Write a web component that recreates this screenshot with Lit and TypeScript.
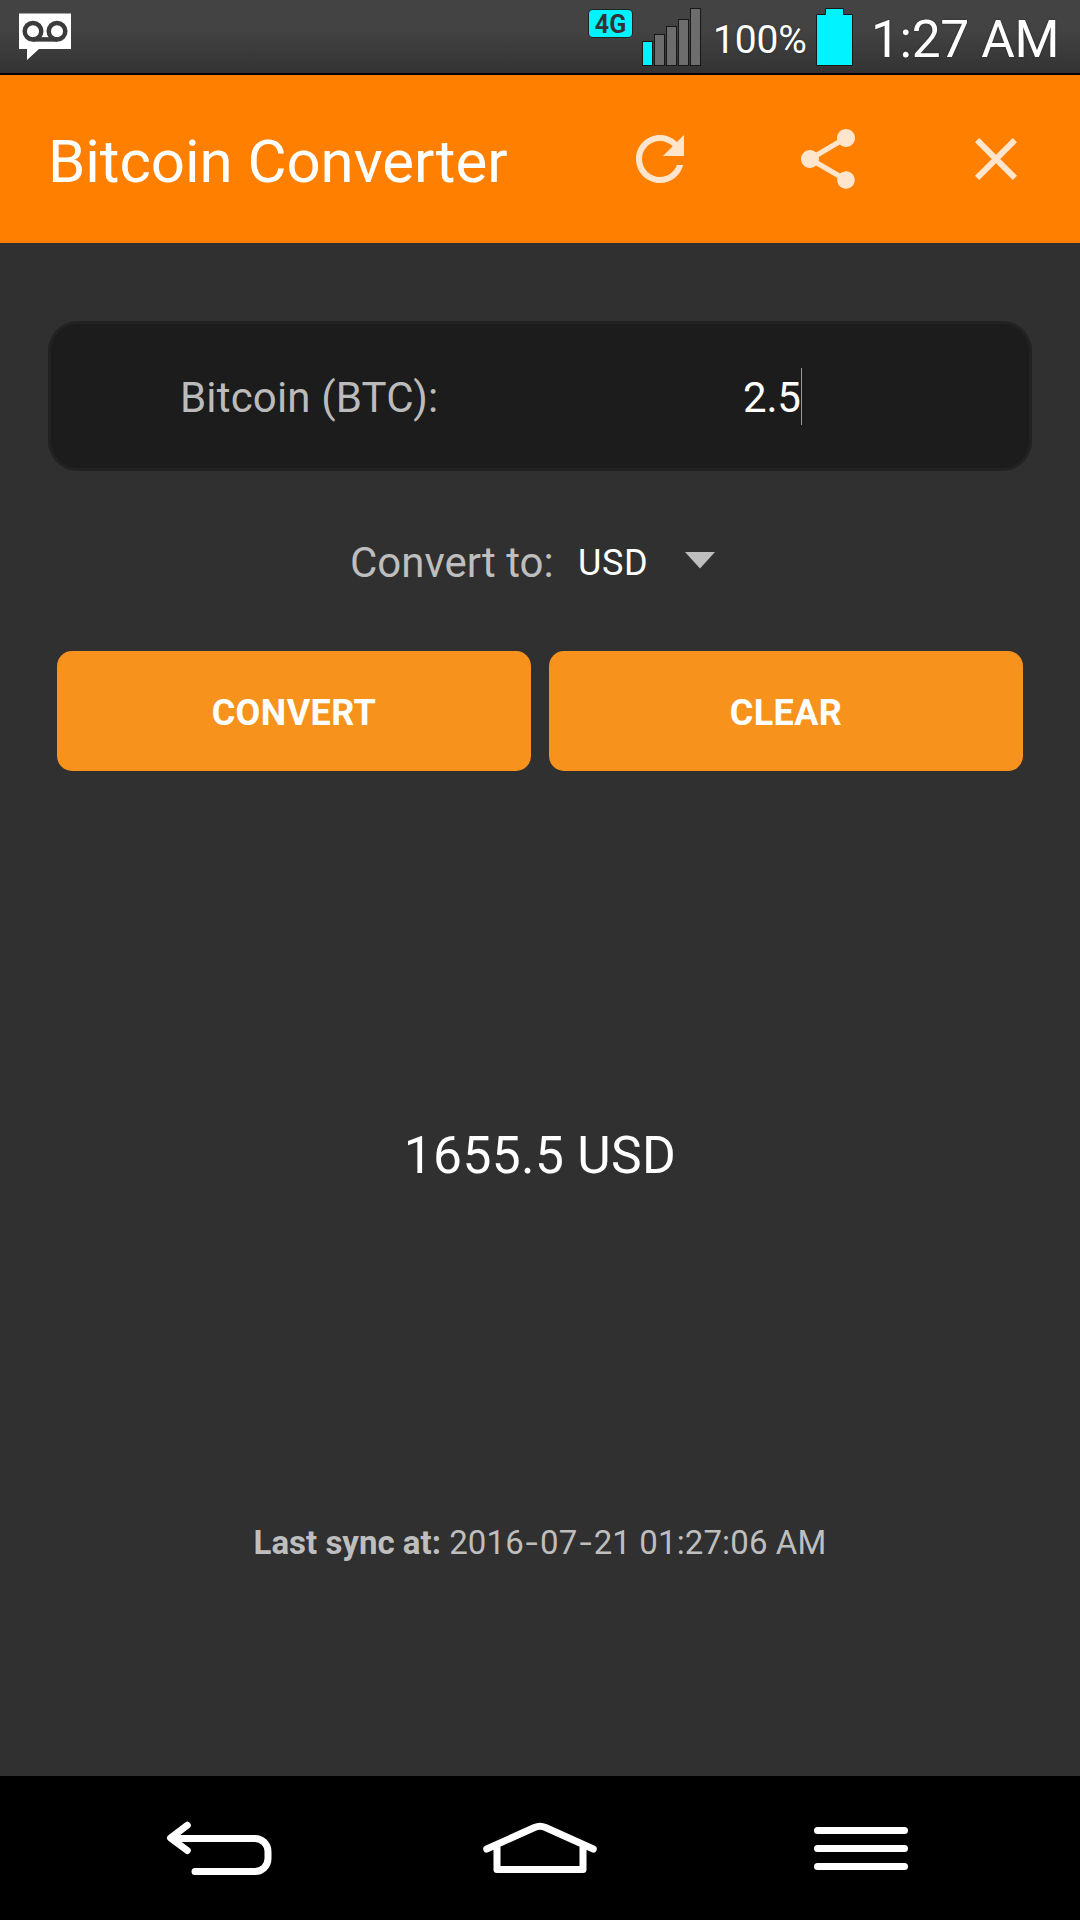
import { LitElement, html, css } from "lit";
import { customElement } from "lit/decorators.js";

@customElement("app-root")
export class AppRoot extends LitElement {
  static styles = css`
    :host { display: block; }
    .screen { display: flex; flex-direction: column; width: 1080px; height: 1920px; overflow: hidden; background: #303030; color: #fff; font-family: Roboto, "Liberation Sans", sans-serif; }
    .screen * { box-sizing: border-box; }
    svg { display: block; flex: none; }
    .status { display: flex; height: 75px; padding: 0 22px 0 0; background: linear-gradient(#434343, #434343 40%, #333) 0 0 / 100% 73px no-repeat #000; text-shadow: 0 0 2px #222; white-space: nowrap; }
    .voicemail { margin: 13px 0 0 19px; }
    .push { flex: 1; }
    .net { width: 43px; height: 27px; margin: 10px 10px 0 0; border-radius: 4px; background: #00f3ff; box-shadow: 0 0 0 1px #222; color: #333; font-size: 25px; font-weight: 700; line-height: 30px; text-align: center; text-shadow: none; }
    .signal { margin-top: 8px; }
    .percent { width: 103px; height: 73px; margin-left: 12px; font-size: 39px; line-height: 80px; letter-spacing: -.2px; }
    .battery { margin-top: 8px; }
    .clock { width: 187px; height: 73px; margin-left: 18px; font-size: 51.5px; line-height: 79px; letter-spacing: -.35px; }
    .appbar { display: flex; align-items: center; height: 168px; padding-left: 48px; background: #ff8000; }
    .title { flex: 1; margin: 0; padding-top: 5px; font-size: 60px; font-weight: 400; line-height: 70px; letter-spacing: -.05px; }
    .action { display: flex; justify-content: center; width: 168px; padding: 0; border: 0; background: none; }
    .main { display: flex; flex-direction: column; height: 1533px; padding: 78px 48px 0; }
    .field { display: flex; height: 150px; border: 3px solid #222; border-radius: 30px; background: #1c1c1c; font-size: 42px; line-height: 148px; }
    .field-label { width: 50%; height: 144px; padding-left: 129px; color: #bbb; letter-spacing: .17px; }
    .entry { display: flex; align-items: center; height: 144px; padding-left: 203px; }
    .amount { height: 144px; line-height: 147px; letter-spacing: -.2px; }
    .caret { width: 1px; height: 57px; background: #999; }
    .row { display: flex; height: 180px; padding-left: 302px; color: #bebebe; font-size: 42px; line-height: 184px; white-space: nowrap; }
    .row-label { width: 228px; }
    .currency { width: 107px; color: #fff; font-size: 36px; letter-spacing: .6px; }
    .arrow { margin-top: 81px; }
    .buttons { display: grid; grid-template-columns: 1fr 1fr; gap: 18px; padding: 0 9px; }
    .button { height: 120px; padding: 3px 0 0; border: 0; border-radius: 15px; background: #f7931c; color: #fff; font: 700 36px/42px Roboto, sans-serif; letter-spacing: .4px; }
    .result { margin-top: 350px; font-size: 51.5px; line-height: 70px; letter-spacing: .35px; text-align: center; }
    .sync { margin-top: 327px; color: #bebebe; font-size: 33px; line-height: 50px; text-align: center; }
    .stamp { letter-spacing: .12px; }
    .dash { display: inline-block; margin: 0 3.5px; transform: scaleX(1.35); }
    .nav { display: flex; height: 144px; background: #000; }
    .back { margin: 39px 0 0 165px; }
    .home { margin: 39px 0 0 205px; }
    .menu { margin: 51px 0 0 214px; }
  `;

  render() {
    return html`
      <div class="screen">
        <div class="status">
          <svg class="voicemail" width="52" height="48" viewBox="0 0 52 48">
            <path fill="#fff" d="M0 .5H52V36H20L8 47V36H0Z" />
            <g fill="none" stroke="#3b3b3b" stroke-width="4.5">
              <circle cx="14" cy="18.2" r="8.3" /><circle cx="38" cy="18.2" r="8.3" /><path d="M14 26.4H38" />
            </g>
          </svg>
          <div class="push"></div>
          <div class="net">4G</div>
          <svg class="signal" width="59" height="58" viewBox="0 0 59 58" stroke="#171717">
            <rect x=".5" y="33.5" width="10" height="24" fill="#00f3ff" />
            <rect x="12.5" y="26.5" width="10" height="31" fill="#6d6d6d" />
            <rect x="24.5" y="18.5" width="10" height="39" fill="#6d6d6d" />
            <rect x="36.5" y="11.5" width="10" height="46" fill="#6d6d6d" />
            <rect x="48.5" y=".5" width="10" height="57" fill="#6d6d6d" />
          </svg>
          <div class="percent">100%</div>
          <svg class="battery" width="37" height="58" viewBox="0 0 37 58">
            <path fill="#00f3ff" stroke="#171717" d="M9.5 .5H27.5V6.5H36.5V57.5H.5V6.5H9.5Z" />
          </svg>
          <div class="clock">1:27 AM</div>
        </div>
        <header class="appbar">
          <h1 class="title">Bitcoin Converter</h1>
          <button class="action" aria-label="Refresh">
            <svg width="72" height="72" viewBox="0 0 24 24" fill="#ffe5cc"><path d="M17.65 6.35C16.2 4.9 14.21 4 12 4c-4.42 0-7.99 3.58-7.99 8s3.57 8 7.99 8c3.73 0 6.84-2.55 7.73-6h-2.08c-.82 2.33-3.04 4-5.65 4-3.31 0-6-2.69-6-6s2.69-6 6-6c1.66 0 3.14.69 4.22 1.78L13 11h7V4l-2.35 2.35z" /></svg>
          </button>
          <button class="action" aria-label="Share">
            <svg width="72" height="72" viewBox="0 0 24 24" fill="#ffe5cc"><path d="M18 16.08c-.76 0-1.44.3-1.96.77L8.91 12.7c.05-.23.09-.46.09-.7s-.04-.47-.09-.7l7.05-4.11c.54.5 1.25.81 2.04.81 1.66 0 3-1.34 3-3s-1.34-3-3-3-3 1.34-3 3c0 .24.04.47.09.7L8.04 9.81C7.5 9.31 6.79 9 6 9c-1.66 0-3 1.34-3 3s1.34 3 3 3c.79 0 1.500-.31 2.040-.81l7.120 4.160c-.05.21-.08.43-.08.65 0 1.610 1.310 2.920 2.920 2.920s2.920-1.310 2.920-2.920-1.310-2.920-2.920-2.920z" /></svg>
          </button>
          <button class="action" aria-label="Close">
            <svg width="72" height="72" viewBox="0 0 24 24" fill="#ffe5cc"><path d="M19 6.41L17.59 5 12 10.59 6.41 5 5 6.41 10.59 12 5 17.59 6.41 19 12 13.41 17.59 19 19 17.59 13.41 12z" /></svg>
          </button>
        </header>
        <main class="main">
          <div class="field">
            <div class="field-label">Bitcoin (BTC):</div>
            <div class="entry"><span class="amount">2.5</span><span class="caret"></span></div>
          </div>
          <div class="row">
            <span class="row-label">Convert to:</span>
            <span class="currency">USD</span>
            <svg class="arrow" width="30" height="17" viewBox="0 0 30 17"><path fill="#bebebe" d="M0 0H30L15 16.5Z" /></svg>
          </div>
          <div class="buttons">
            <button class="button">CONVERT</button>
            <button class="button">CLEAR</button>
          </div>
          <div class="result">1655.5 USD</div>
          <div class="sync"><b>Last sync at:</b> <span class="stamp">2016<span class="dash">-</span>07<span class="dash">-</span>21 01:27:06 AM</span></div>
        </main>
        <nav class="nav">
          <svg class="back" width="110" height="62" viewBox="0 0 110 62" fill="none" stroke="#fff" stroke-width="7" stroke-linecap="round" stroke-linejoin="round">
            <path d="M22.3 10.3L5.500 23L22.3 35.5M7 23.5H90A13 13 0 0 1 103 36.5V43.500A13 13 0 0 1 90 56.500H30" />
          </svg>
          <svg class="home" width="120" height="62" viewBox="0 0 120 62" fill="none" stroke="#fff" stroke-width="7" stroke-linecap="round" stroke-linejoin="round">
            <path d="M6.700 34L54.500 12.500Q60 10 65.500 12.500L113.300 34M17 30V54.500H103V30" />
          </svg>
          <svg class="menu" width="94" height="43" viewBox="0 0 94 43" fill="none" stroke="#fff" stroke-width="7" stroke-linecap="round">
            <path d="M3.500 3.500H90.500M3.500 21.500H90.500M3.500 39.500H90.500" />
          </svg>
        </nav>
      </div>
    `;
  }
}
